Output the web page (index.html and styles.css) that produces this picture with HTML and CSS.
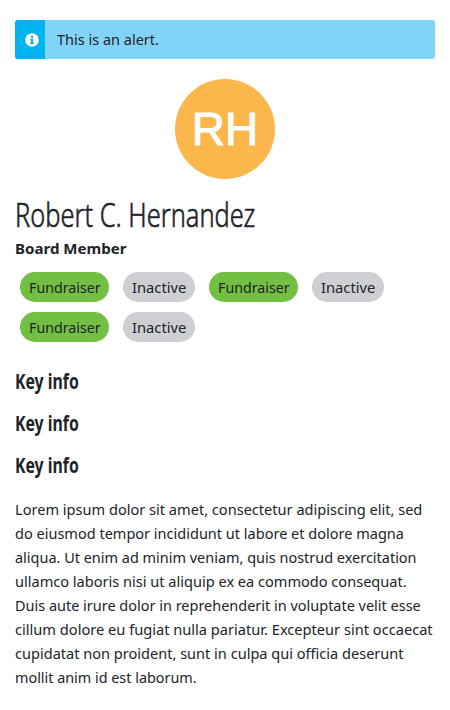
FILE: index.html
```html
<!DOCTYPE html>
<html lang="en">
<head>
<meta charset="utf-8">
<title>Robert C. Hernandez</title>
<link rel="stylesheet" href="styles.css">
</head>
<body>
<div class="alert"><div class="alert-icon"><svg width="14" height="14" viewBox="0 0 14 14"><circle cx="7" cy="7" r="6.8" fill="#fff"/><path d="M6 3h2v2H6zM5.200 6H8v3.700h.8V11H5.200V9.700H6V7.300h-.8z" fill="#00b4f1"/></svg></div><div class="alert-text"><span class="fit" data-w="101.500">This is an alert.</span></div></div>
<div class="avatar"><span>RH</span></div>
<h1><span class="fit" data-w="240">Robert C. Hernandez</span></h1>
<div class="role"><span class="fit" data-w="111.500">Board Member</span></div>
<div class="labels">
<span class="label success"><span class="fit" data-w="72">Fundraiser</span></span>
<span class="label"><span class="fit" data-w="54">Inactive</span></span>
<span class="label success"><span class="fit" data-w="72">Fundraiser</span></span>
<span class="label"><span class="fit" data-w="54">Inactive</span></span>
<span class="label success"><span class="fit" data-w="72">Fundraiser</span></span>
<span class="label"><span class="fit" data-w="54">Inactive</span></span>
</div>
<h2><span class="fit" data-w="64">Key info</span></h2>
<h2><span class="fit" data-w="64">Key info</span></h2>
<h2><span class="fit" data-w="64">Key info</span></h2>
<div class="copy">
<div><span class="fit" data-w="407">Lorem ipsum dolor sit amet, consectetur adipiscing elit, sed</span></div>
<div><span class="fit" data-w="389">do eiusmod tempor incididunt ut labore et dolore magna</span></div>
<div><span class="fit" data-w="402">aliqua. Ut enim ad minim veniam, quis nostrud exercitation</span></div>
<div><span class="fit" data-w="392">ullamco laboris nisi ut aliquip ex ea commodo consequat.</span></div>
<div><span class="fit" data-w="406">Duis aute irure dolor in reprehenderit in voluptate velit esse</span></div>
<div><span class="fit" data-w="418">cillum dolore eu fugiat nulla pariatur. Excepteur sint occaecat</span></div>
<div><span class="fit" data-w="389">cupidatat non proident, sunt in culpa qui officia deserunt</span></div>
<div><span class="fit" data-w="182">mollit anim id est laborum.</span></div>
</div>
<script src="fit.js"></script>
</body>
</html>
```
FILE: styles.css
```css
* { box-sizing: border-box; }
body { margin: 0; padding: 20px 15px; background: #fff; color: #212327; font: 15px/24px "Noto Sans", sans-serif; }
.fit { display: inline-block; white-space: nowrap; transform-origin: 0 50%; }
.alert { display: flex; height: 39px; border-radius: 3px; overflow: hidden; background: #81d4f7; }
.alert-icon { width: 30px; padding-left: 3px; background: #00b4f1; display: flex; align-items: center; justify-content: center; }
.alert-text { padding: 7px 12px; }
.avatar { width: 100px; height: 100px; border-radius: 50%; margin: 20px auto 15px; background: #fbb74c; color: #fff; display: flex; align-items: center; justify-content: center; font: 46px/100px "Liberation Sans", sans-serif; -webkit-text-stroke: 1px #fff; }
h1 { margin: 0; font-size: 33px; line-height: 42px; font-weight: 300; -webkit-text-stroke: 0.6px #212327; height: 42px; }
.role { font-weight: 700; height: 24px; }
.labels { display: flex; flex-wrap: wrap; gap: 10px 14px; padding: 12px 5px 0; margin-bottom: 24px; }
.label { height: 30px; border-radius: 15px; background: #cdcfd2; width: 72px; padding-left: 9px; line-height: 30px; }
.success { background: #72bf44; width: 89px; }
h2 { margin: 0 0 12px; font-size: 21px; line-height: 30px; font-weight: 700; height: 30px; }
.copy { margin-top: 17px; white-space: nowrap; }
.copy div { height: 24px; }
```
FILE: fit.js
```js
document.querySelectorAll('.fit').forEach(function (el) {
  el.style.transform = 'scaleX(' + el.dataset.w / el.offsetWidth + ')';
});
```
